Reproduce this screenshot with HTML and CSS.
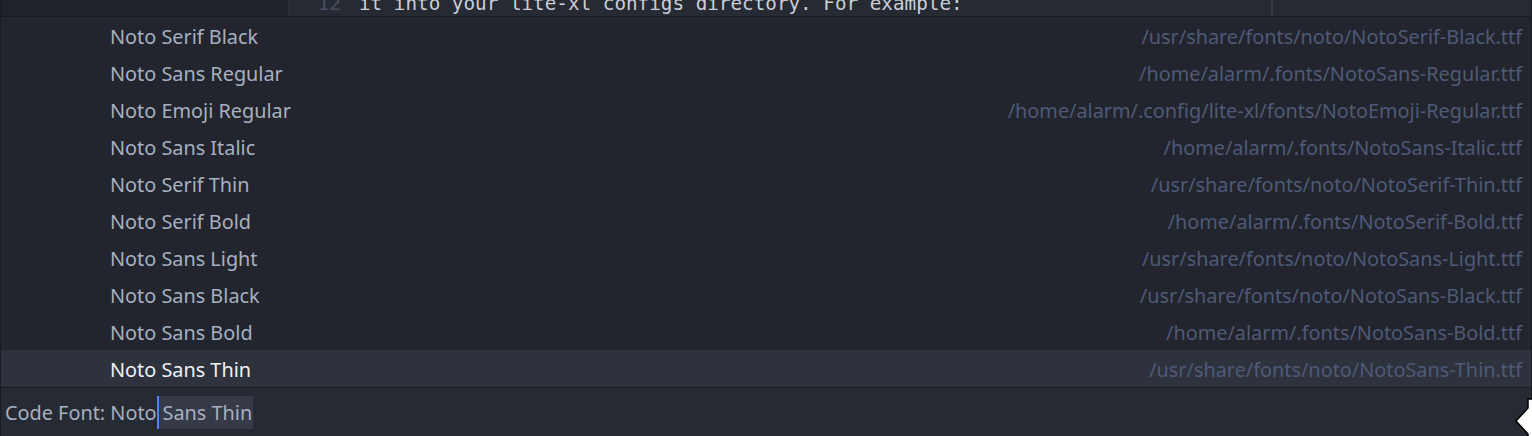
FILE: index.html
```html
<!DOCTYPE html>
<html>
<head>
<meta charset="utf-8">
<link rel="stylesheet" href="styles.css">
</head>
<body>
<div class="app">
  <div class="editor-strip">
    <div class="sidepane"></div>
    <div class="editor">
      <div class="code-line">
        <span class="lineno">12</span>
        <span class="code">it into your lite-xl configs directory. For example:</span>
      </div>
      <div class="guide"></div>
    </div>
  </div>
  <div class="list">
    <div class="row"><span class="name">Noto Serif Black</span><span class="path">/usr/share/fonts/noto/NotoSerif-Black.ttf</span></div>
    <div class="row"><span class="name">Noto Sans Regular</span><span class="path">/home/alarm/.fonts/NotoSans-Regular.ttf</span></div>
    <div class="row"><span class="name">Noto Emoji Regular</span><span class="path">/home/alarm/.config/lite-xl/fonts/NotoEmoji-Regular.ttf</span></div>
    <div class="row"><span class="name">Noto Sans Italic</span><span class="path">/home/alarm/.fonts/NotoSans-Italic.ttf</span></div>
    <div class="row"><span class="name">Noto Serif Thin</span><span class="path">/usr/share/fonts/noto/NotoSerif-Thin.ttf</span></div>
    <div class="row"><span class="name">Noto Serif Bold</span><span class="path">/home/alarm/.fonts/NotoSerif-Bold.ttf</span></div>
    <div class="row"><span class="name">Noto Sans Light</span><span class="path">/usr/share/fonts/noto/NotoSans-Light.ttf</span></div>
    <div class="row"><span class="name">Noto Sans Black</span><span class="path">/usr/share/fonts/noto/NotoSans-Black.ttf</span></div>
    <div class="row"><span class="name">Noto Sans Bold</span><span class="path">/home/alarm/.fonts/NotoSans-Bold.ttf</span></div>
    <div class="row selected"><span class="name">Noto Sans Thin</span><span class="path">/usr/share/fonts/noto/NotoSans-Thin.ttf</span></div>
  </div>
  <div class="input-bar">
    <span class="label">Code Font: </span><span class="typed">Noto</span><span class="caret"></span><span class="suggest">Sans Thin</span>
  </div>
  <svg class="cursor" width="20" height="38" viewBox="0 0 20 38">
    <polygon points="15,1 24,1 24,44 15,44 15,36 3,23 15,10" fill="#ffffff" stroke="#000000" stroke-width="1.5"/>
  </svg>
</div>
</body>
</html>
```
FILE: styles.css
```css
html, body {
  margin: 0;
  padding: 0;
  background: #22252d;
  overflow: hidden;
}
.app {
  position: relative;
  width: 1532px;
  height: 436px;
  display: flex;
  flex-direction: column;
  font-family: "Noto Sans", "Open Sans", sans-serif;
  box-sizing: border-box;
  border-left: 1px solid #1a1c22;
  border-right: 1px solid #1a1c22;
}
.editor-strip {
  height: 16px;
  display: flex;
  border-bottom: 1px solid #181a1f;
  overflow: hidden;
  flex: none;
}
.sidepane {
  width: 287px;
  background: #1f2228;
  border-right: 1px solid #2c303a;
  flex: none;
}
.editor {
  flex: 1;
  background: #262a33;
  display: flex;
  position: relative;
  overflow: hidden;
}
.code-line {
  display: flex;
  margin-top: -9px;
  height: 26px;
  line-height: 26px;
  font-family: "DejaVu Sans Mono", monospace;
  font-size: 19.3px;
  white-space: pre;
}
.lineno {
  width: 52px;
  text-align: right;
  color: #4a5062;
  padding-right: 18px;
}
.code {
  color: #c9ced8;
}
.guide {
  position: absolute;
  left: 982px;
  top: 0;
  bottom: 0;
  width: 2px;
  background: #353a46;
}
.list {
  height: 370px;
  flex: none;
  display: flex;
  flex-direction: column;
  background: #22252d;
}
.row {
  height: 37px;
  flex: none;
  display: flex;
  align-items: center;
  justify-content: space-between;
  padding: 1px 9px 0 109px;
  box-sizing: border-box;
  font-size: 19.85px;
}
.name {
  color: #a7b0c0;
}
.path {
  color: #4e5a77;
}
.row.selected {
  background: #2d323d;
}
.row.selected .name {
  color: #eef1f6;
}
.input-bar {
  flex: 1;
  border-top: 1px solid #181a1f;
  background: #262a33;
  display: flex;
  align-items: center;
  padding-left: 4px;
  font-size: 19.85px;
  color: #a7b0c0;
  white-space: pre;
}
.caret {
  width: 2px;
  height: 33px;
  background: #4f82f0;
}
.suggest {
  background: #363a47;
  height: 33px;
  line-height: 33px;
  padding: 0 1px 0 4px;
}
.cursor {
  position: absolute;
  left: 1512px;
  top: 398px;
}
```
